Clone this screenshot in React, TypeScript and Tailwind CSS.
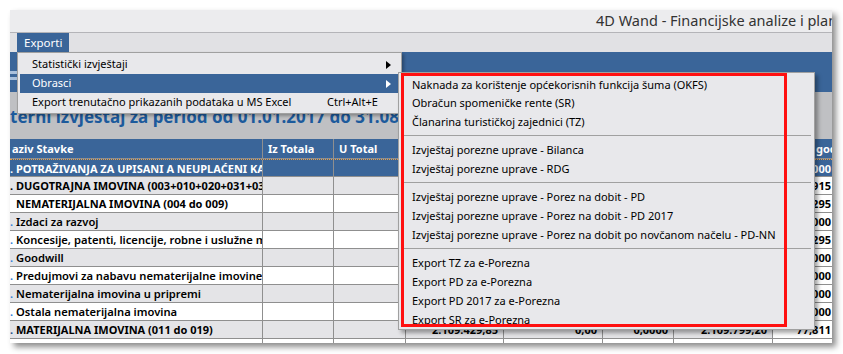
import React from "react";

const font = "font-['Noto_Sans','Open_Sans',sans-serif]";

type Row = {
  label: string;
  dot: string;
  bold?: boolean;
  bg: string;
  text: string;
  last: string;
  vals?: string[];
};

const rows: Row[] = [
  { label: "POTRAŽIVANJA ZA UPISANI A NEUPLAĆENI KAPITAL", dot: "text-white", bold: true, bg: "bg-[#3a6599]", text: "text-white", last: "100,000" },
  { label: "DUGOTRAJNA IMOVINA (003+010+020+031+036)", dot: "text-black", bold: true, bg: "bg-[#e4e4e7]", text: "text-black", last: "101,915" },
  { label: "NEMATERIJALNA IMOVINA (004 do 009)", dot: "text-white", bold: true, bg: "bg-white", text: "text-black", last: "100,295" },
  { label: "Izdaci za razvoj", dot: "text-[#2f7fd8]", bg: "bg-[#e4e4e7]", text: "text-black", last: "100,000" },
  { label: "Koncesije, patenti, licencije, robne i uslužne marke", dot: "text-[#2f7fd8]", bg: "bg-white", text: "text-black", last: "100,295" },
  { label: "Goodwill", dot: "text-[#2f7fd8]", bg: "bg-[#e4e4e7]", text: "text-black", last: "100,000" },
  { label: "Predujmovi za nabavu nematerijalne imovine", dot: "text-[#2f7fd8]", bg: "bg-white", text: "text-black", last: "100,000" },
  { label: "Nematerijalna imovina u pripremi", dot: "text-[#2f7fd8]", bg: "bg-[#e4e4e7]", text: "text-black", last: "100,000" },
  { label: "Ostala nematerijalna imovina", dot: "text-[#2f7fd8]", bg: "bg-white", text: "text-black", last: "100,000" },
  { label: "MATERIJALNA IMOVINA (011 do 019)", dot: "text-[#1c4f8c]", bold: true, bg: "bg-[#e4e4e7]", text: "text-black", last: "77,811", vals: ["2.109.429,85", "0,00", "0,0000", "2.109.799,20"] },
];

const cols = "grid grid-cols-[253px_71px_72px_98px_99px_71px_99px_80px]";
const cell = "border-r border-b border-[#8f8f8f] overflow-hidden whitespace-nowrap";

const subItems: (string | null)[] = [
  "Naknada za korištenje općekorisnih funkcija šuma (OKFS)",
  "Obračun spomeničke rente (SR)",
  "Članarina turističkoj zajednici (TZ)",
  null,
  "Izvještaj porezne uprave - Bilanca",
  "Izvještaj porezne uprave - RDG",
  null,
  "Izvještaj porezne uprave - Porez na dobit - PD",
  "Izvještaj porezne uprave - Porez na dobit - PD 2017",
  "Izvještaj porezne uprave - Porez na dobit po novčanom načelu - PD-NN",
  null,
  "Export TZ za e-Porezna",
  "Export PD za e-Porezna",
  "Export PD 2017 za e-Porezna",
  "Export SR za e-Porezna",
];

const Arrow: React.FC<{ color: string }> = ({ color }) => (
  <svg width="5" height="8" viewBox="0 0 5 8">
    <path d="M0 0 L5 4 L0 8 Z" fill={color} />
  </svg>
);

const App: React.FC = () => {
  return (
    <div className={`w-[843px] h-[354px] bg-white pt-[10px] pl-[10px] ${font}`}>
      <div className="relative w-[822px] h-[333px] overflow-hidden bg-[#e1e1e4] shadow-[4px_4px_6px_rgba(0,0,0,0.45)] flex flex-col">
        {/* title bar */}
        <div className="h-[23px] shrink-0 border-b border-[#b4b4b8] bg-[#ececee] flex items-center pl-[586px] overflow-hidden">
          <span className="text-[14.5px] text-[#333] whitespace-nowrap">4D Wand - Financijske analize i planiranje</span>
        </div>

        {/* menu bar */}
        <div className="h-[19px] shrink-0 flex">
          <div className="ml-[7px] px-[7px] bg-[#3a6599] text-white text-[11.5px] leading-[19px]">Exporti</div>
        </div>

        {/* toolbar */}
        <div className="h-[40px] shrink-0 bg-[#3a6599] flex flex-col gap-[3px] pt-[19px]">
          <div className="w-[7px] h-[3px] bg-[#a9c0dc]" />
          <div className="w-[7px] h-[3px] bg-[#a9c0dc]" />
        </div>

        <div className="h-[47px] shrink-0 bg-[#bfc0c3] overflow-hidden">
          <div className="mt-[12px] text-[17px] leading-[26px] font-bold text-[#1c5a9c] whitespace-nowrap">
            terni izvještaj za period od 01.01.2017 do 31.08.2017
          </div>
        </div>

        {/* table */}
        <div className="text-[11px]">
          <div className={`${cols} h-[20px] bg-[#3a6599] text-white font-bold leading-[19px]`}>
            <div className={`${cell} pl-[2px]`}>aziv Stavke</div>
            <div className={`${cell} pl-[5px]`}>Iz Totala</div>
            <div className={`${cell} pl-[5px]`}>U Total</div>
            <div className={`${cell} pl-[5px]`}>Iznos</div>
            <div className={`${cell} pl-[5px]`}>Iznos 2</div>
            <div className={`${cell} pl-[5px]`}>Udio</div>
            <div className={`${cell} pl-[5px]`}>Prošla</div>
            <div className={`${cell} pl-[43px]`}>godina</div>
          </div>
          {rows.map((r, i) => (
            <div
              key={i}
              className={`${cols} h-[18px] leading-[17px] ${r.bg} ${r.text} ${i === 0 ? "border-t border-dotted border-[#f0a040]" : ""}`}
            >
              <div className={`${cell} ${r.bold ? "font-bold" : "font-semibold text-[11.2px]"}`}>
                <span className={r.dot}>.</span> {r.label}
              </div>
              <div className={cell} />
              <div className={cell} />
              {[0, 1, 2, 3].map((k) => (
                <div key={k} className={`${cell} text-right pr-[5px] font-bold`}>
                  {r.vals ? r.vals[k] : ""}
                </div>
              ))}
              <div className={`${cell} text-right pr-[21px] font-bold ${i === 0 ? "" : "bg-white"}`}>{r.last}</div>
            </div>
          ))}
          <div className={`${cols} h-[18px] bg-white`}>
            {[0, 1, 2, 3, 4, 5, 6, 7].map((k) => (
              <div key={k} className={cell} />
            ))}
          </div>
        </div>

        {/* Exporti menu */}
        <div className="absolute left-[7px] top-[42px] w-[385px] border border-[#a0a0a0] bg-[#e8e8eb] pt-[2px] pb-[1px] text-[11px] text-black shadow-[2px_2px_3px_rgba(0,0,0,0.3)]">
          <div className="h-[19px] mx-[2px] pl-[12px] pr-[8px] flex items-center justify-between">
            <span>Statistički izvještaji</span>
            <Arrow color="#000" />
          </div>
          <div className="h-[19px] mx-[2px] pl-[12px] pr-[8px] flex items-center justify-between bg-[#3a6599] text-white">
            <span>Obrasci</span>
            <Arrow color="#fff" />
          </div>
          <div className="h-[19px] mx-[2px] pl-[12px] pr-[8px] flex items-center">
            <span className="flex-1">Export trenutačno prikazanih podataka u MS Excel</span>
            <span className="w-[64px]">Ctrl+Alt+E</span>
          </div>
        </div>

        {/* Obrasci submenu */}
        <div className="absolute left-[388px] top-[62px] w-[417px] h-[258px] overflow-hidden border border-[#a0a0a0] bg-[#e8e8eb] pt-[2.5px] text-[11px] text-black shadow-[3px_3px_4px_rgba(0,0,0,0.35)]">
          {subItems.map((s, i) =>
            s === null ? (
              <div key={i} className="h-[9.4px] pt-[3px] mx-[3px]">
                <div className="h-px bg-[#a0a0a0]" />
              </div>
            ) : (
              <div key={i} className="h-[18.8px] pl-[13px] flex items-center whitespace-nowrap">
                {s}
              </div>
            )
          )}
          <div className="absolute left-[2px] top-0 w-[386px] h-[254px] border-[3px] border-[#ff1010]" />
        </div>
      </div>
    </div>
  );
};

export default App;
